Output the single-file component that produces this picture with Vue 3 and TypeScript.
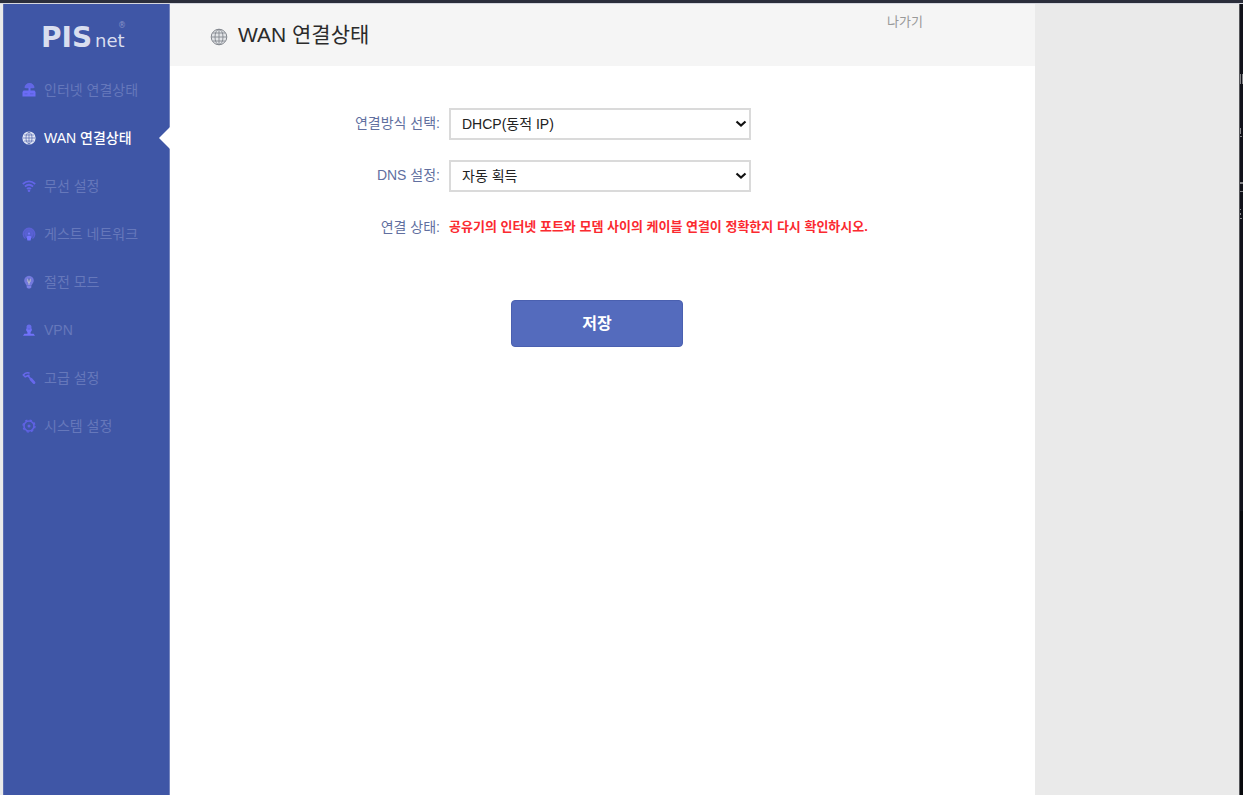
<script setup lang="ts">
import { ref } from 'vue'

interface MenuItem {
  id: string
  label: string
}

const menu: MenuItem[] = [
  { id: 'internet', label: '인터넷 연결상태' },
  { id: 'wan', label: 'WAN 연결상태' },
  { id: 'wifi', label: '무선 설정' },
  { id: 'guest', label: '게스트 네트워크' },
  { id: 'power', label: '절전 모드' },
  { id: 'vpn', label: 'VPN' },
  { id: 'advanced', label: '고급 설정' },
  { id: 'system', label: '시스템 설정' },
]

const active = ref('wan')
const mode = ref('dhcp')
const dns = ref('auto')
</script>

<template>
  <div class="screen">
    <div class="top-edge"></div>
    <div class="page">
      <aside class="sidebar">
        <div class="logo">
          <span class="logo-main">PIS</span><span class="logo-sub">net</span><span class="logo-mark">®</span>
        </div>
        <nav class="menu">
          <a
            v-for="item in menu"
            :key="item.id"
            href="#"
            class="menu-item"
            :class="{ active: item.id === active }"
            @click.prevent="active = item.id"
          >
            <svg class="menu-icon" viewBox="0 0 14 14" aria-hidden="true">
              <g v-if="item.id === 'internet'" fill="#6b6cf5">
                <path d="M2.500 4.800A4.800 4.500 0 0 1 12.500 4.800Q10 5.800 7.500 4.900Q5 5.800 2.500 4.800Z" opacity=".8" />
                <path d="M6.500 4.500h2V8h-2z" />
                <path d="M1.500 7.500h11L13.500 9v4.500H.500V9z" />
                <path d="M2.500 10.800h3M8 10.800h3.500" stroke="#5560cf" stroke-width=".8" />
              </g>
              <g v-else-if="item.id === 'wan'" fill="none" stroke="#3f56a6" stroke-width=".6">
                <circle cx="7" cy="7" r="6.600" fill="#e3e7f5" stroke="none" />
                <ellipse cx="7" cy="7" rx="3" ry="5.800" />
                <path d="M7 1v12M1 7h12M2.200 4h9.600M2.200 10h9.600" />
              </g>
              <g v-else-if="item.id === 'wifi'" fill="none" stroke="#6365e8" stroke-width="1.700">
                <path d="M.800 5Q7-.300 13.200 5M2.900 7.500Q7 4 11.100 7.500M4.900 9.900Q7 8.200 9.100 9.900" />
                <circle cx="7" cy="11.800" r="1.300" fill="#6365e8" stroke="none" />
              </g>
              <g v-else-if="item.id === 'guest'" fill="none" stroke="#5a60d4" stroke-width="1.500">
                <circle cx="7" cy="6.500" r="5" fill="#5461ce" stroke="none" />
                <path d="M3.500 11.500A5.700 5.700 0 1 1 10.500 11.500M4.400 8.700A3.200 3.200 0 1 1 9.600 8.700" />
                <circle cx="7" cy="6.600" r="1.100" fill="#7778fa" stroke="none" />
                <path d="M4.500 9.700Q7 8 9.500 9.700L8.600 13.500H5.400Z" fill="#7374ff" stroke="none" />
              </g>
              <g v-else-if="item.id === 'power'">
                <path d="M7 .700a4.900 4.900 0 0 1 4.800 5c0 2-1.800 3.200-2.300 4.900H4.500C4 8.900 2.200 7.700 2.200 5.700A4.900 4.900 0 0 1 7 .700Z" fill="#7379dc" />
                <path d="M4.700 10.400h4.600v2L8 13.600H6L4.700 12.400Z" fill="#7b80e6" />
                <path d="M5.400 3.500 7 5l1.600-1.500v3L7.500 8v1.800h-1V8L5.400 6.500Z" fill="#bdc0ce" />
                <path d="M7 3.500v3" stroke="#485797" stroke-width=".9" />
              </g>
              <g v-else-if="item.id === 'vpn'" fill="#7172fa">
                <circle cx="7" cy="4" r="2.500" opacity=".8" />
                <path d="M4.200 5.500h5.600v2L8.600 9.300v1.500h3L13 12.700H1l1.400-1.900h3V9.300L4.200 7.500Z" />
                <path d="M5.700 6h2.600" stroke="#4c5bc0" stroke-width=".7" />
              </g>
              <g v-else-if="item.id === 'advanced'" fill="none" stroke="#6768ec" stroke-linecap="round">
                <path d="M7 2Q3.500 1 1.300 4l1.900 1.800L7 4.300" stroke-width="1.500" />
                <path d="m5.800 4.500 3 3.500" stroke-width="1.600" />
                <path d="m9 8.300 3 3.300" stroke-width="2.800" />
              </g>
              <g v-else fill="none" stroke="#6062e4">
                <circle cx="7" cy="7" r="5" stroke-width="1.600" />
                <circle cx="7" cy="7" r="6" stroke-width="1.300" stroke-dasharray="2.350 2.350" />
                <circle cx="7" cy="7" r="1.500" fill="#6062e4" stroke="none" />
              </g>
            </svg>
            <span>{{ item.label }}</span>
          </a>
        </nav>
      </aside>

      <main class="content">
        <header class="header">
          <svg class="title-icon" viewBox="0 0 18 18" aria-hidden="true">
            <g fill="none" stroke="#858990">
              <circle cx="9" cy="9" r="7.800" fill="#e3e5e8" stroke-width="1" />
              <ellipse cx="9" cy="9" rx="4" ry="7.600" stroke-width=".9" />
              <path d="M9 1.200v15.600M1.200 9h15.600M2.800 5h12.400M2.800 13h12.400" stroke-width=".9" />
            </g>
          </svg>
          <h1 class="title">WAN 연결상태</h1>
          <a class="exit" href="#">나가기</a>
        </header>

        <form class="form" @submit.prevent>
          <div class="row">
            <label class="label" for="mode">연결방식 선택:</label>
            <div class="select-box">
              <select id="mode" v-model="mode">
                <option value="dhcp">DHCP(동적 IP)</option>
              </select>
              <svg class="chevron" viewBox="0 0 12 8" aria-hidden="true">
                <path d="m1.500 1.500 4.500 4 4.500-4" fill="none" stroke="#111" stroke-width="2.200" />
              </svg>
            </div>
          </div>
          <div class="row">
            <label class="label" for="dns">DNS 설정:</label>
            <div class="select-box">
              <select id="dns" v-model="dns">
                <option value="auto">자동 획득</option>
              </select>
              <svg class="chevron" viewBox="0 0 12 8" aria-hidden="true">
                <path d="m1.500 1.500 4.500 4 4.500-4" fill="none" stroke="#111" stroke-width="2.200" />
              </svg>
            </div>
          </div>
          <div class="row">
            <span class="label">연결 상태:</span>
            <strong class="status">공유기의 인터넷 포트와 모뎀 사이의 케이블 연결이 정확한지 다시 확인하시오.</strong>
          </div>
          <button class="save" type="submit">저장</button>
        </form>
      </main>

      <svg class="side-edge" viewBox="0 0 4 792" preserveAspectRatio="xMinYMin slice" aria-hidden="true">
        <path d="M0 0h4v792H0z" fill="#08090d" />
        <path d="M0 0h4v507H0z" fill="#11121a" />
        <path d="M0 70h2v10H0zM3 70h1v10H3zM0 124h2v6H0zM0 132h3v1H0zM0 178h4v2H1v7h3v1H0zM0 205h2v1H0zM0 209h2v2H0zM0 214h3v1H0z" fill="#858589" />
        <path d="M0 0h1v792H0z" fill="#55565a" />
      </svg>
    </div>
  </div>
</template>

<style>
body {
  margin: 0;
}
</style>

<style scoped>
.screen {
  display: flex;
  flex-direction: column;
  min-height: 100vh;
  background: #eaeaea;
  color: #2b2b2b;
  font-family: "Liberation Sans", "Noto Sans CJK KR", sans-serif;
  font-size: 14px;
  line-height: 20px;
}
.top-edge {
  height: 3px;
  background: #2b2e3b;
  border-bottom: 1px solid #d5d7df;
}
.page {
  flex: 1;
  display: grid;
  grid-template-columns: 167px minmax(0, 1fr) 4px;
  padding-left: 3px;
}
.sidebar {
  box-sizing: border-box;
  background: #3f56a6;
  border-left: 1px solid #5c6fb3;
  border-right: 1px solid #7585bf;
}
.logo {
  position: relative;
  display: flex;
  align-items: baseline;
  gap: 3px;
  height: 62px;
  box-sizing: border-box;
  padding: 18px 0 0 37px;
  color: #d9deef;
  font-family: "DejaVu Sans", sans-serif;
  line-height: 32px;
}
.logo-main {
  font-size: 28px;
  font-weight: 700;
}
.logo-sub {
  font-size: 18px;
}
.logo-mark {
  position: absolute;
  left: 114px;
  top: 18px;
  font-size: 8px;
  line-height: 8px;
  color: #8794c7;
}
.menu {
  display: flex;
  flex-direction: column;
}
.menu-item {
  position: relative;
  display: flex;
  align-items: center;
  gap: 8px;
  height: 48px;
  padding-left: 18px;
  color: #6678bb;
  text-decoration: none;
}
.menu-icon {
  width: 14px;
  height: 14px;
}
.menu-item.active {
  color: #fff;
  font-weight: 500;
}
.menu-item.active::after {
  content: "";
  position: absolute;
  right: -1px;
  top: 13px;
  border: solid transparent;
  border-width: 11px 11px 11px 0;
  border-right-color: #fff;
}
.content {
  margin-right: 204px;
  background: #fff;
}
.header {
  display: flex;
  align-items: center;
  height: 62px;
  padding: 0 112px 0 40px;
  background: #f5f5f5;
}
.title-icon {
  width: 18px;
  height: 18px;
  margin-top: 4px;
}
.title {
  margin: 0 0 0 10px;
  font-size: 21px;
  font-weight: 400;
  line-height: 28px;
}
.exit {
  align-self: flex-start;
  margin: 8px 0 0 auto;
  color: #999;
  font-size: 13px;
  text-decoration: none;
}
.form {
  display: flex;
  flex-direction: column;
  gap: 20px;
  padding-top: 42px;
}
.row {
  display: grid;
  grid-template-columns: 270px minmax(0, 1fr);
  align-items: center;
  column-gap: 9px;
  min-height: 32px;
}
.label {
  padding-bottom: 3px;
  color: #616f9f;
  text-align: right;
}
.select-box {
  position: relative;
  width: 302px;
}
.select-box select {
  display: block;
  width: 100%;
  height: 32px;
  padding: 0 28px 1px 11px;
  appearance: none;
  border: 2px solid #dadada;
  border-radius: 0;
  background: #fff;
  color: #222;
  font: inherit;
}
.chevron {
  position: absolute;
  right: 4px;
  top: 12px;
  width: 12px;
  height: 8px;
  pointer-events: none;
}
.status {
  padding-bottom: 3px;
  color: #fb2a30;
  font-size: 13px;
  white-space: nowrap;
}
.save {
  width: 172px;
  height: 47px;
  margin: 36px 0 0 341px;
  border: 1px solid #4a60b0;
  border-radius: 4px;
  background: #546bbd;
  color: #fff;
  font: inherit;
  font-size: 16px;
  font-weight: 700;
}
.side-edge {
  width: 4px;
  height: 100%;
}
</style>
